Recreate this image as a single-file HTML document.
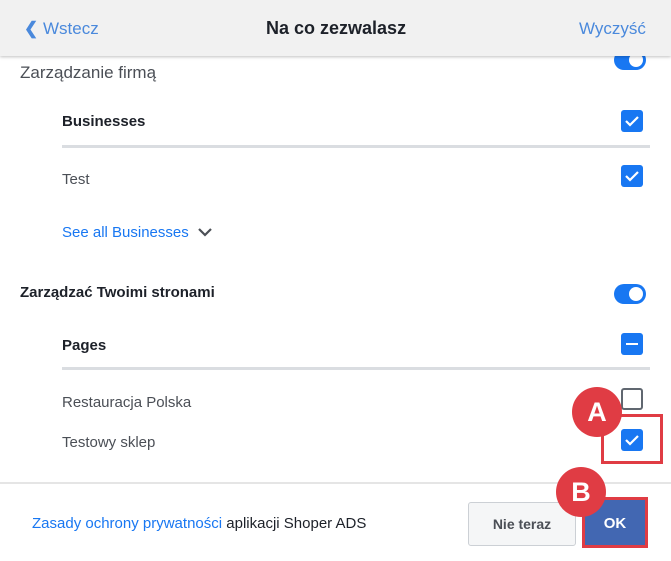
<!DOCTYPE html><html><head><meta charset="utf-8"><style>
*{margin:0;padding:0;box-sizing:border-box}
body{width:671px;height:561px;background:#fff;font-family:"Liberation Sans",Arial,sans-serif;position:relative;overflow:hidden}
.a{position:absolute;white-space:nowrap}
.hdr{left:0;top:0;width:671px;height:56px;background:#f1f1f1;box-shadow:0 1px 3px rgba(0,0,0,.25);z-index:2}
.cb{position:absolute;width:22px;height:22px;border-radius:3px;background:#1877f2}
.cb svg{position:absolute;left:3px;top:4px}
.tg{position:absolute;width:32px;height:20px;border-radius:10px;background:#1877f2}
.tg:after{content:"";position:absolute;right:3px;top:3px;width:14px;height:14px;border-radius:50%;background:#fff}
.g{color:#4b4f56;font-size:15px}
.b{color:#1d2129;font-size:15px;font-weight:bold}
.hr{position:absolute;left:62px;width:588px;height:3px;background:#dadde1}
.circ{position:absolute;width:50px;height:50px;border-radius:50%;background:#e03c44;color:#fff;font-weight:bold;font-size:27px;text-align:center;line-height:50px;z-index:3}
</style></head><body>
<div class="a hdr">
<div class="a" style="left:24px;top:19px;color:#4a89dc;font-size:17px"><span style="font-weight:bold">&#10094;</span> Wstecz</div>
<div class="a" style="left:266px;top:18px;color:#1d2129;font-size:18px;font-weight:bold">Na co zezwalasz</div>
<div class="a" style="left:579px;top:19px;color:#4a89dc;font-size:17px">Wyczyść</div>
</div>
<div class="tg" style="left:614px;top:50px"></div>
<div class="a g" style="left:20px;top:63px;font-size:17px">Zarządzanie firmą</div>
<div class="a b" style="left:62px;top:113px">Businesses</div>
<div class="cb" style="left:621px;top:110px"><svg width="16" height="14"><path d="M2 7l4 4 8-8" stroke="#fff" stroke-width="2.2" fill="none"/></svg></div>
<div class="hr" style="top:145px"></div>
<div class="a g" style="left:62px;top:171px">Test</div>
<div class="cb" style="left:621px;top:165px"><svg width="16" height="14"><path d="M2 7l4 4 8-8" stroke="#fff" stroke-width="2.2" fill="none"/></svg></div>
<div class="a" style="left:62px;top:224px;color:#1877f2;font-size:15px">See all Businesses <svg width="16" height="10" style="margin-left:4px"><path d="M2 2l6 6 6-6" stroke="#4b4f56" stroke-width="2.2" fill="none"/></svg></div>
<div class="a b" style="left:20px;top:284px">Zarządzać Twoimi stronami</div>
<div class="tg" style="left:614px;top:284px"></div>
<div class="a b" style="left:62px;top:337px">Pages</div>
<div class="cb" style="left:621px;top:333px"><div style="position:absolute;left:5px;top:10px;width:12px;height:2px;background:#fff"></div></div>
<div class="hr" style="top:367px"></div>
<div class="a g" style="left:62px;top:394px">Restauracja Polska</div>
<div style="position:absolute;left:621px;top:388px;width:22px;height:22px;border:2.5px solid #606770;border-radius:3px"></div>
<div class="a g" style="left:62px;top:434px">Testowy sklep</div>
<div class="cb" style="left:621px;top:429px"><svg width="16" height="14"><path d="M2 7l4 4 8-8" stroke="#fff" stroke-width="2.2" fill="none"/></svg></div>
<div style="position:absolute;left:601px;top:414px;width:62px;height:50px;border:3px solid #e03c44"></div>
<div class="circ" style="left:572px;top:387px">A</div>
<div style="position:absolute;left:0;top:482px;width:671px;height:2px;background:#e5e5e5"></div>
<div class="a" style="left:32px;top:515px;font-size:15px;color:#1d2129"><span style="color:#1877f2">Zasady ochrony prywatności</span> aplikacji Shoper ADS</div>
<div style="position:absolute;left:468px;top:502px;width:108px;height:44px;border:1px solid #ccd0d5;border-radius:3px;background:#f5f6f7;color:#4b4f56;font-weight:bold;font-size:14px;text-align:center;line-height:42px">Nie teraz</div>
<div style="position:absolute;left:582px;top:497px;width:66px;height:51px;border:3px solid #e03c44;background:#4267b2;color:#fff;font-weight:bold;font-size:15px;text-align:center;line-height:48px">OK</div>
<div class="circ" style="left:556px;top:467px">B</div>
</body></html>
